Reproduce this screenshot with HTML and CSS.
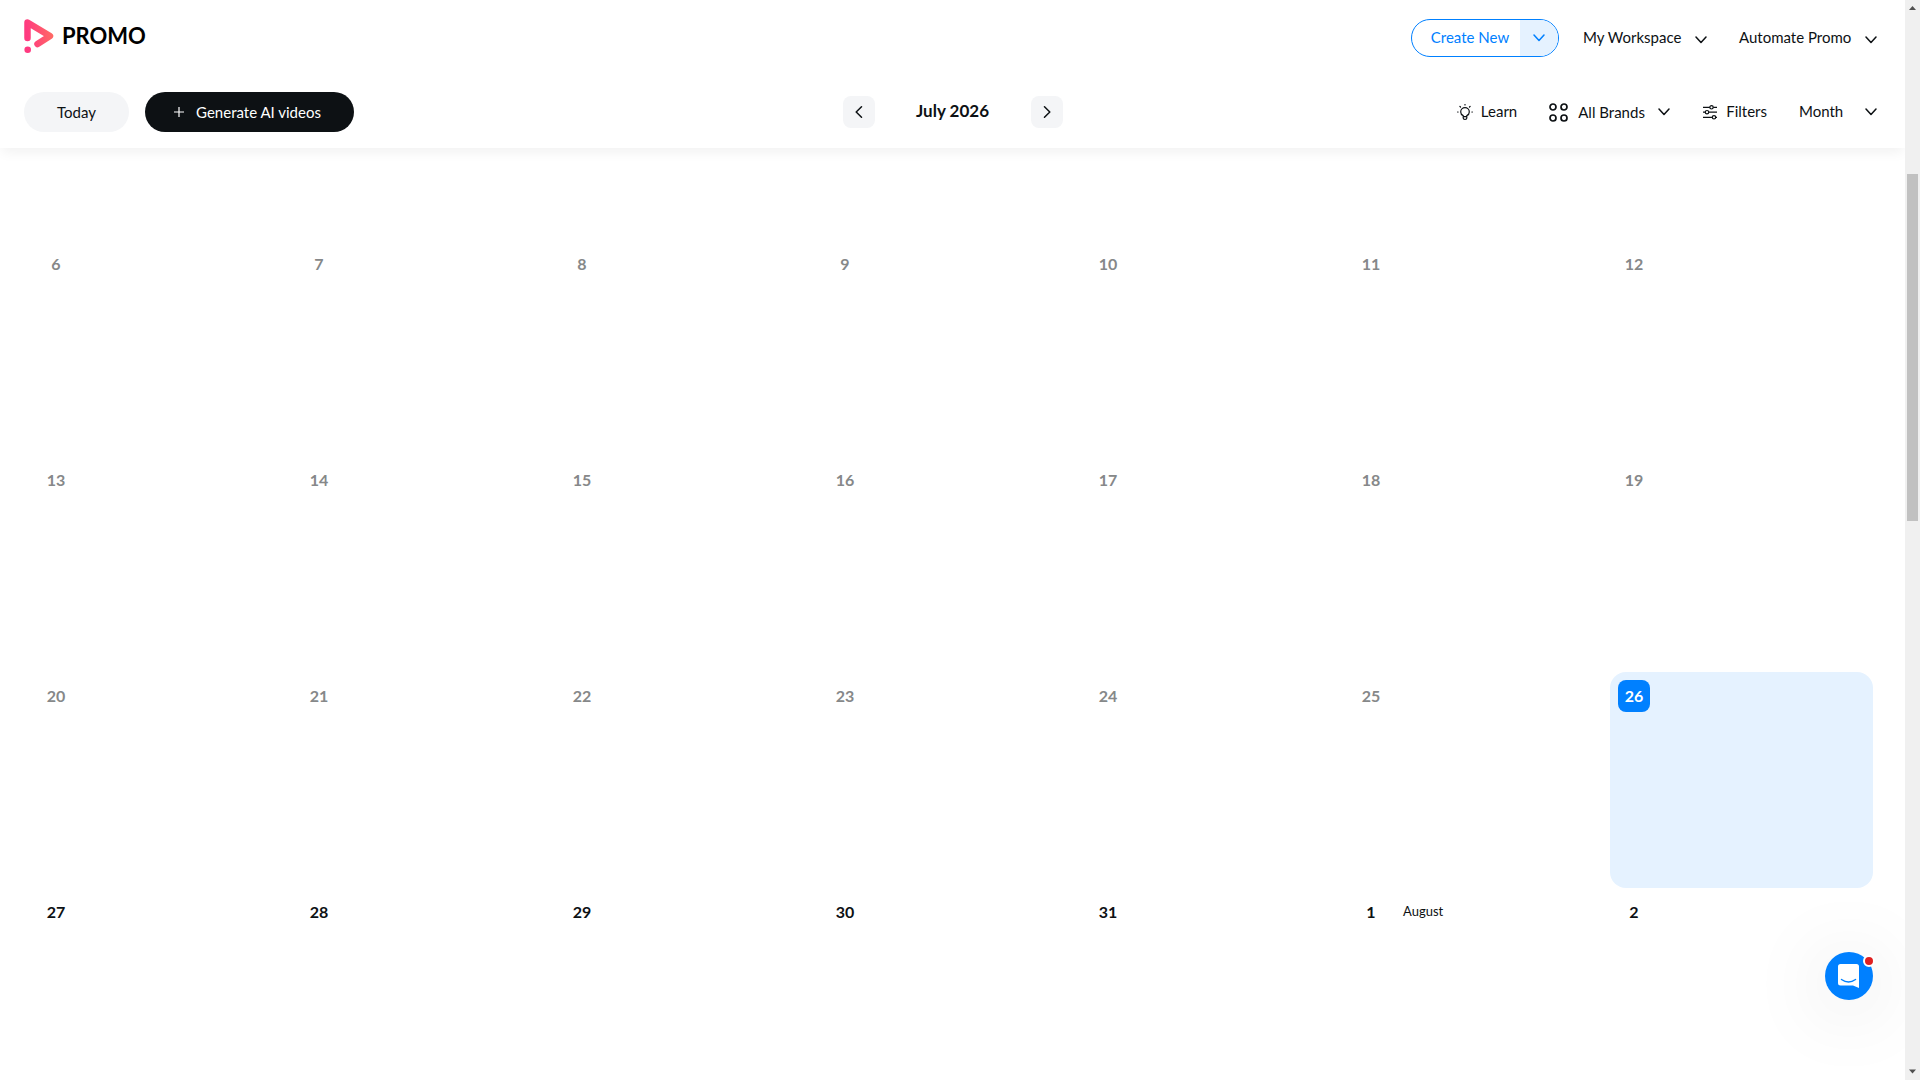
FILE: index.html
```html
<!DOCTYPE html>
<html lang="en">
<head>
<meta charset="utf-8">
<meta name="viewport" content="width=device-width, initial-scale=1">
<title>Promo Calendar</title>
<link rel="stylesheet" href="styles.css">
</head>
<body>
<svg class="sprite" aria-hidden="true">
  <symbol id="chevron" viewBox="0 0 12 8"><path d="M1 1l5 5.500l5-5.500" fill="none" stroke="currentColor" stroke-width="1.500" stroke-linecap="round" stroke-linejoin="round"/></symbol>
</svg>
<div class="app">
  <header class="header">
    <div class="bar">
      <a class="logo" href="#">
        <svg class="logo-mark" viewBox="0 0 30 34" aria-hidden="true">
          <defs><linearGradient id="mark" gradientUnits="userSpaceOnUse" x1="4" y1="20" x2="29" y2="16"><stop offset="0" stop-color="#ff3a80"/><stop offset="1" stop-color="#ff6a64"/></linearGradient></defs>
          <path d="M3.500 19V3.500L26 17L13.500 25" fill="none" stroke="url(#mark)" stroke-width="6.500" stroke-linecap="round" stroke-linejoin="round"/>
          <circle cx="3.700" cy="30.700" r="3.300" fill="#ff3a80"/>
        </svg>
        <span>PROMO</span>
      </a>
      <nav class="account">
        <div class="create">
          <button class="create-main" type="button">Create New</button>
          <button class="create-more" type="button" aria-label="More create options"><svg class="chevron"><use href="#chevron"/></svg></button>
        </div>
        <button class="menu menu-workspace" type="button">My Workspace<svg class="chevron chevron-low"><use href="#chevron"/></svg></button>
        <button class="menu menu-user" type="button">Automate Promo<svg class="chevron chevron-low"><use href="#chevron"/></svg></button>
      </nav>
    </div>
    <div class="toolbar">
      <div class="actions">
        <button class="pill today" type="button">Today</button>
        <button class="pill generate" type="button"><svg class="plus" viewBox="0 0 10 10" aria-hidden="true"><path d="M5 0v10M0 5h10" stroke="currentColor" stroke-width="1.200"/></svg>Generate AI videos</button>
      </div>
      <div class="period">
        <button class="step" type="button" aria-label="Previous month"><svg viewBox="0 0 8 12"><path d="M6.500 .8L1.200 6l5.300 5.200" fill="none" stroke="currentColor" stroke-width="1.500" stroke-linecap="round" stroke-linejoin="round"/></svg></button>
        <h1>July 2026</h1>
        <button class="step" type="button" aria-label="Next month"><svg viewBox="0 0 8 12"><path d="M1.500 .8L6.800 6l-5.300 5.200" fill="none" stroke="currentColor" stroke-width="1.500" stroke-linecap="round" stroke-linejoin="round"/></svg></button>
      </div>
      <div class="tools">
        <button class="tool learn" type="button">
          <svg class="icon" viewBox="0 0 16 16" aria-hidden="true"><g fill="none" stroke="currentColor" stroke-width="1.200" stroke-linecap="round"><path d="M6.200 11.600C4.500 10.800 3.700 9.500 3.700 7.900a4.300 4.300 0 0 1 8.600 0c0 1.600-.8 2.900-2.500 3.700v2.300q0 1.500-1.800 1.500t-1.800-1.500zM6.200 12.600h3.600"/><path d="M8 .5v.4M2.900 2.400l.6.600M13.100 2.400l-.6.600M.6 8h.5M14.900 8h.5"/></g></svg>
          <span class="tool-label">Learn</span>
        </button>
        <div class="picker brands">
          <svg class="icon-brands" viewBox="0 0 19 19" aria-hidden="true"><g fill="none" stroke="currentColor" stroke-width="1.700"><circle cx="4" cy="4" r="3"/><circle cx="15" cy="4" r="3"/><circle cx="4" cy="15" r="3"/><circle cx="15" cy="15" r="3"/></g></svg>
          <select aria-label="Brand"><option>All Brands</option></select>
          <svg class="chevron"><use href="#chevron"/></svg>
        </div>
        <button class="tool filters" type="button">
          <svg class="icon" viewBox="0 0 16 16" aria-hidden="true"><g fill="none" stroke="currentColor" stroke-width="1.200"><path d="M1 3.300h6.800M11.200 3.300H15M1 8.200h2.200M6.700 8.200H15M1 13.300h9.200M13.700 13.300H15"/><circle cx="9.500" cy="3.300" r="1.700"/><circle cx="5" cy="8.200" r="1.700"/><circle cx="12" cy="13.300" r="1.700"/></g></svg>
          <span class="tool-label">Filters</span>
        </button>
        <div class="picker view">
          <select aria-label="Calendar view"><option>Month</option></select>
          <svg class="chevron"><use href="#chevron"/></svg>
        </div>
      </div>
    </div>
  </header>
  <main class="content">
    <table class="calendar" aria-label="July 2026">
      <tbody>
        <tr class="past"><td><time>6</time></td><td><time>7</time></td><td><time>8</time></td><td><time>9</time></td><td><time>10</time></td><td><time>11</time></td><td><time>12</time></td></tr>
        <tr class="past"><td><time>13</time></td><td><time>14</time></td><td><time>15</time></td><td><time>16</time></td><td><time>17</time></td><td><time>18</time></td><td><time>19</time></td></tr>
        <tr class="past"><td><time>20</time></td><td><time>21</time></td><td><time>22</time></td><td><time>23</time></td><td><time>24</time></td><td><time>25</time></td><td class="current"><time>26</time></td></tr>
        <tr><td><time>27</time></td><td><time>28</time></td><td><time>29</time></td><td><time>30</time></td><td><time>31</time></td><td><time>1</time><span class="month-name">August</span></td><td><time>2</time></td></tr>
      </tbody>
    </table>
  </main>
  <button class="chat" type="button" aria-label="Open chat">
    <svg viewBox="0 0 24 26" aria-hidden="true"><path d="M3.500 1h16A2.500 2.500 0 0 1 22 3.500V25l-6-2.500H3.500A2.500 2.500 0 0 1 1 20V3.500A2.500 2.500 0 0 1 3.500 1z" fill="#fff"/><path d="M4.500 16.500q7 5 14 0" fill="none" stroke="#0080ff" stroke-width="1.500" stroke-linecap="round"/></svg>
    <span class="unread"></span>
  </button>
</div>
<div class="scrollbar" aria-hidden="true">
  <svg viewBox="0 0 15 17"><path d="M4 10h7L7.500 6z" fill="#505050"/></svg>
  <span class="thumb"></span>
  <svg class="scroll-down" viewBox="0 0 15 17"><path d="M4 6.500h7l-3.500 4z" fill="#505050"/></svg>
</div>
</body>
</html>
```
FILE: styles.css
```css
* { box-sizing: border-box; }

body {
  margin: 0;
  display: flex;
  height: 100vh;
  overflow: hidden;
  background: #fff;
  color: #0d1114;
  font: 15px/24px Lato, sans-serif;
}

button, select {
  font: inherit;
  color: inherit;
  border: 0;
  margin: 0;
  padding: 0;
  background: none;
  cursor: pointer;
}

svg { display: block; flex: none; }

.sprite { position: absolute; width: 0; height: 0; }

.app {
  position: relative;
  flex: 1;
  min-width: 0;
  display: flex;
  flex-direction: column;
  overflow: hidden;
}

.header {
  flex: none;
  padding: 0 24px 16px;
  box-shadow: 0 6px 12px -2px rgba(0, 0, 0, 0.06);
}

.bar {
  display: flex;
  justify-content: space-between;
  align-items: center;
  height: 76px;
}

.logo {
  display: flex;
  gap: 8px;
  align-items: center;
  margin-bottom: 4px;
  color: #000;
  font-size: 22px;
  font-weight: 700;
  text-decoration: none;
}

.logo-mark { width: 30px; height: 34px; }

.account { display: flex; gap: 24px; align-items: center; padding-right: 4px; }

.create {
  display: flex;
  width: 148px;
  height: 38px;
  border: 1px solid #0080ff;
  border-radius: 19px;
  overflow: hidden;
  color: #0080ff;
}

.create-main { flex: 1; padding: 0 0 2px 8px; }

.create-more {
  display: grid;
  place-items: center;
  width: 38px;
  background: #e5f2ff;
}

.chevron { width: 12px; height: 8px; }

.chevron-low { margin-top: 4px; }

.menu {
  display: flex;
  justify-content: space-between;
  align-items: center;
  padding-bottom: 2px;
}

.menu .chevron { margin-top: 6px; }

.menu-workspace { width: 124px; margin-right: 8px; }

.menu-user { width: 138px; }

.toolbar {
  display: grid;
  grid-template-columns: 1fr auto 1fr;
  align-items: center;
  padding-top: 16px;
}

.actions { display: flex; gap: 16px; }

.pill { height: 40px; border-radius: 20px; }

.today { width: 105px; background: #f4f5f7; }

.generate {
  display: flex;
  justify-content: center;
  align-items: center;
  gap: 12px;
  width: 209px;
  padding-right: 4px;
  background: #0d1114;
  color: #fff;
}

.plus { width: 10px; height: 10px; }

.period {
  display: flex;
  justify-content: space-between;
  align-items: center;
  width: 220px;
}

.period h1 { margin: 0; padding-bottom: 2px; font-size: 17px; font-weight: 700; }

.step {
  display: grid;
  place-items: center;
  width: 32px;
  height: 32px;
  border-radius: 8px;
  background: #f4f5f7;
}

.step svg { width: 8px; height: 12px; }

.tools { display: flex; justify-content: flex-end; align-items: center; gap: 32px; padding-right: 4px; }

.tool { display: flex; align-items: center; gap: 8px; }

.tool-label, .view select { padding-bottom: 2px; }

.icon { width: 16px; height: 16px; }

.icon-brands { width: 19px; height: 19px; }

.picker { display: flex; align-items: center; }

.picker select {
  appearance: none;
  width: 100%;
  margin-right: -12px;
}

.picker .chevron { pointer-events: none; }

.brands { gap: 10px; width: 121px; }

.brands select { margin-right: -22px; }

.view { width: 78px; }

.content { flex: 1; min-height: 0; overflow: hidden; padding: 92px 32px 0; }

.calendar { width: 100%; table-layout: fixed; border-collapse: collapse; }

.calendar td { height: 216px; padding: 8px; vertical-align: top; border-radius: 16px; }

.calendar time {
  display: inline-block;
  width: 32px;
  border-radius: 8px;
  font-size: 16px;
  line-height: 32px;
  text-align: center;
  font-weight: 700;
}

.past time { color: #868889; }

.calendar .current { background: #e5f2ff; }

.calendar .current time { background: #0080ff; color: #fff; }

.month-name { margin-left: 16px; font-size: 13px; vertical-align: 2px; }

.chat {
  position: absolute;
  right: 32px;
  bottom: 80px;
  display: grid;
  place-items: center;
  width: 48px;
  height: 48px;
  border-radius: 50%;
  background: #0080ff;
  box-shadow: 0 8px 80px rgba(0, 0, 0, 0.15);
}

.chat svg { width: 24px; height: 26px; }

.unread {
  position: absolute;
  top: 3px;
  right: -2px;
  width: 12px;
  height: 12px;
  border: 2px solid #fff;
  border-radius: 50%;
  background: #e02020;
}

.scrollbar {
  flex: none;
  display: grid;
  grid-template-rows: 17px 157fr 347fr 542fr 17px;
  justify-items: center;
  width: 15px;
  background: #f0f0f0;
}

.scrollbar svg { width: 15px; height: 17px; }

.thumb { grid-row: 3; width: 11px; background: #c1c1c1; }

.scroll-down { grid-row: 5; }
```
